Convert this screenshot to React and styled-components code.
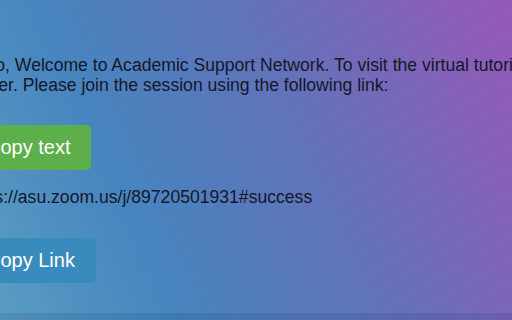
import React from 'react'
import styled, { createGlobalStyle } from 'styled-components'

const GlobalStyle = createGlobalStyle`
  html, body {
    margin: 0;
    padding: 0;
  }
  body {
    font-family: 'Liberation Sans', Arial, sans-serif;
  }
`

const Page = styled.div`
  width: 512px;
  height: 320px;
  overflow: hidden;
  display: flex;
  flex-direction: column;
  background: linear-gradient(66deg, #5b9cc2 0%, #4685bf 27%, #6372b9 60%, #9758b7 100%);
`

const Main = styled.main`
  flex: 1;
  display: flex;
  flex-direction: column;
  align-items: flex-start;
  padding-top: 55px;
  margin-left: -35px;
`

const Message = styled.p`
  width: 610px;
  margin: 0;
  font-size: 17.6px;
  line-height: 20px;
  color: #15172b;
`

const LinkText = styled.div`
  margin-top: ${(p) => p.$gap}px;
  font-size: 17.6px;
  line-height: 20px;
  color: #15172b;
  white-space: nowrap;
`

const ActionButton = styled.button`
  margin-top: ${(p) => p.$gap}px;
  padding: 11px 21px;
  border: none;
  border-radius: 5px;
  background: ${(p) => p.$color};
  color: #ffffff;
  font-family: 'Liberation Sans', Arial, sans-serif;
  font-size: 20px;
  line-height: 23px;
  cursor: pointer;
`

const Footer = styled.footer`
  height: 7px;
  background: rgba(20, 40, 90, 0.12);
`

const zoomLink = 'https://asu.zoom.us/j/89720501931#success'

export default function App() {
  return (
    <>
      <GlobalStyle />
      <Page>
        <Main>
          <Message>
            Hello, Welcome to Academic Support Network. To visit the virtual tutoring
            center. Please join the session using the following link:
          </Message>
          <ActionButton $gap={30} $color="#5daf4c">Copy text</ActionButton>
          <LinkText $gap={17}>{zoomLink}</LinkText>
          <ActionButton $gap={31} $color="#3a8bbd">Copy Link</ActionButton>
        </Main>
        <Footer />
      </Page>
    </>
  )
}
